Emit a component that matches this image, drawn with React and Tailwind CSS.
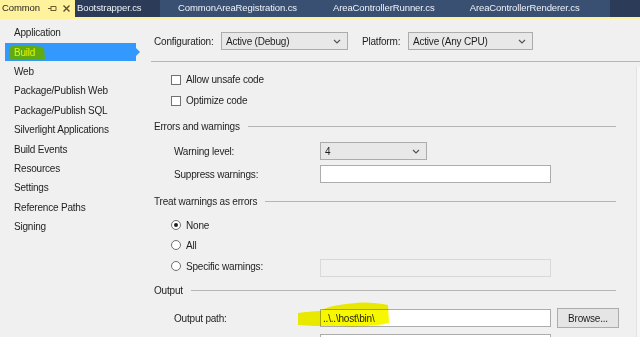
import React from "react";

function Chevron() {
  return (
    <svg width="8" height="5" viewBox="0 0 8 5" className="shrink-0">
      <path d="M1 1 L4 4 L7 1" stroke="#555" strokeWidth="1.2" fill="none" />
    </svg>
  );
}

function Select({ value, className }) {
  return (
    <div className={"h-[18px] border border-[#acacac] bg-[#e8e8e8] flex items-center justify-between pl-[4px] pr-[6px] text-[#1e1e1e] " + className}>
      <span>{value}</span>
      <Chevron />
    </div>
  );
}

function Checkbox({ label }) {
  return (
    <div className="h-[21px] flex items-center pl-[21px]">
      <div className="w-[10px] h-[10px] border border-[#707070] bg-white" />
      <span className="ml-[5px]">{label}</span>
    </div>
  );
}

function Radio({ label, checked }) {
  return (
    <div className="h-[20px] flex items-center pl-[21px]">
      <div className="w-[10px] h-[10px] rounded-full border border-[#707070] bg-white flex items-center justify-center">
        {checked && <div className="w-[4px] h-[4px] rounded-full bg-[#222]" />}
      </div>
      <span className="ml-[5px]">{label}</span>
    </div>
  );
}

function Header({ label }) {
  return (
    <div className="h-[20px] flex items-center pl-[4px] pr-[20px]">
      <span>{label}</span>
      <div className="flex-1 ml-[8px] h-px bg-[#b5b5b5]" />
    </div>
  );
}

const navItems = [
  "Application",
  "Build",
  "Web",
  "Package/Publish Web",
  "Package/Publish SQL",
  "Silverlight Applications",
  "Build Events",
  "Resources",
  "Settings",
  "Reference Paths",
  "Signing",
];

export default function App() {
  return (
    <div className="w-[640px] h-[357px] flex flex-col bg-white overflow-hidden font-['Liberation_Sans',Arial,sans-serif] text-[10px] tracking-[-0.2px] text-[#1e1e1e]">
      {/* Tab bar */}
      <div className="h-[17px] shrink-0 flex bg-[#2b3b58] text-[#eef2f8] text-[9.5px] tracking-[-0.1px]">
        <div className="w-[75px] bg-[#fff29d] text-[#1e1e1e] flex items-center pl-[2px]">
          <span className="w-[44px]">Common</span>
          <svg width="9" height="7" viewBox="0 0 9 7" className="ml-[2px]">
            <path d="M0 3.5 H3 M3 1 V6 M3 1.5 H8 V5.5 H3" stroke="#6b5d2a" strokeWidth="1" fill="none" />
          </svg>
          <svg width="7" height="7" viewBox="0 0 7 7" className="ml-[6px]">
            <path d="M0.5 0.5 L6.5 6.5 M6.5 0.5 L0.5 6.5" stroke="#5a4f2a" strokeWidth="1.4" />
          </svg>
        </div>
        <div className="w-[85px] flex items-center pl-[2px]">Bootstrapper.cs</div>
        <div className="w-[450px] flex items-center bg-[#3a5073]">
          <span className="ml-[18px]">CommonAreaRegistration.cs</span>
          <span className="ml-[36px]">AreaControllerRunner.cs</span>
          <span className="ml-[35px]">AreaControllerRenderer.cs</span>
        </div>
        <div className="flex-1" />
      </div>
      <div className="h-[2px] shrink-0 bg-[#fff29d]" />

      {/* Body */}
      <div className="h-[318px] shrink-0 flex bg-[#f0f0f0] overflow-hidden">
        {/* Left nav */}
        <div className="w-[150px] shrink-0 pt-[4px]">
          {navItems.map((item) =>
            item === "Build" ? (
              <div key={item} className="h-[19.4px] flex items-center">
                <div className="relative ml-[5px] w-[131px] h-[18px] bg-[#3399ff] flex items-center pl-[9px] text-[#e6f200]">
                  <svg className="absolute left-[2px] top-[1px]" width="40" height="17" viewBox="0 0 40 17">
                    <path d="M2 3 C10 1 25 2 37 3 L38 15 C25 16 12 16 2 15 Z" fill="#5fac12" />
                  </svg>
                  <span className="relative">Build</span>
                  <div className="absolute right-[-4px] top-[5px] w-0 h-0 border-y-[4px] border-y-transparent border-l-[4px] border-l-[#3399ff]" />
                </div>
              </div>
            ) : (
              <div key={item} className="h-[19.4px] flex items-center pl-[14px] text-[#1e1e1e]">
                {item}
              </div>
            )
          )}
        </div>

        {/* Right content */}
        <div className="flex-1 min-w-0 flex flex-col">
          <div className="h-[42px] shrink-0 flex items-center pl-[4px] pt-[2px]">
            <span className="w-[67px]">Configuration:</span>
            <Select value="Active (Debug)" className="w-[127px]" />
            <span className="ml-[14px] w-[46px]">Platform:</span>
            <Select value="Active (Any CPU)" className="w-[125px]" />
          </div>
          <div className="h-px shrink-0 bg-[#b5b5b5] ml-[1px]" />
          <div className="flex-1 min-h-0 flex overflow-hidden">
            <div className="flex-1 pt-[7px]">
              <Checkbox label="Allow unsafe code" />
              <Checkbox label="Optimize code" />
              <div className="h-[5px]" />
              <Header label="Errors and warnings" />
              <div className="h-[5px]" />
              <div className="h-[20px] flex items-center pl-[24px]">
                <span className="w-[146px]">Warning level:</span>
                <Select value="4" className="w-[107px]" />
              </div>
              <div className="h-[3px]" />
              <div className="h-[20px] flex items-center pl-[24px]">
                <span className="w-[146px]">Suppress warnings:</span>
                <div className="w-[231px] h-[18px] border border-[#acacac] bg-white" />
              </div>
              <div className="h-[7px]" />
              <Header label="Treat warnings as errors" />
              <div className="h-[4px]" />
              <Radio label="None" checked />
              <Radio label="All" />
              <div className="h-[2px]" />
              <div className="h-[22px] flex items-center pl-[21px]">
                <div className="w-[10px] h-[10px] rounded-full border border-[#707070] bg-white mb-[4px]" />
                <span className="ml-[5px] w-[134px] mb-[4px]">Specific warnings:</span>
                <div className="w-[231px] h-[18px] border border-[#d9d9d9] bg-[#f0f0f0]" />
              </div>
              <div className="h-[1px]" />
              <Header label="Output" />
              <div className="h-[8px]" />
              <div className="h-[20px] flex items-center pl-[24px] relative">
                <span className="w-[146px]">Output path:</span>
                <div className="w-[231px] h-[18px] border border-[#acacac] bg-white flex items-center pl-[2px]">
                  ..\..\host\bin\
                </div>
                <div className="ml-[6px] w-[62px] h-[20px] border border-[#acacac] bg-[#e5e5e5] flex items-center justify-center">
                  Browse...
                </div>
                <svg className="absolute left-[148px] top-[-7px] mix-blend-multiply" width="92" height="30" viewBox="0 0 92 30">
                  <path d="M0 12 C8 11 15 10 22 10 C30 5 45 3 58 2 C68 1 80 2 90 4 L91 22 C80 25 60 26 40 25 C25 25 10 25 0 24 Z" fill="#f7f700" />
                </svg>
              </div>
              <div className="h-[6px]" />
              <div className="ml-[170px] w-[231px] h-[18px] border border-[#acacac] bg-white" />
            </div>
            <div className="w-[4px] shrink-0 mt-[5px] bg-[#f7f7f7] border-l border-[#e2e2e2]" />
          </div>
        </div>
      </div>
      <div className="flex-1 bg-white" />
    </div>
  );
}
